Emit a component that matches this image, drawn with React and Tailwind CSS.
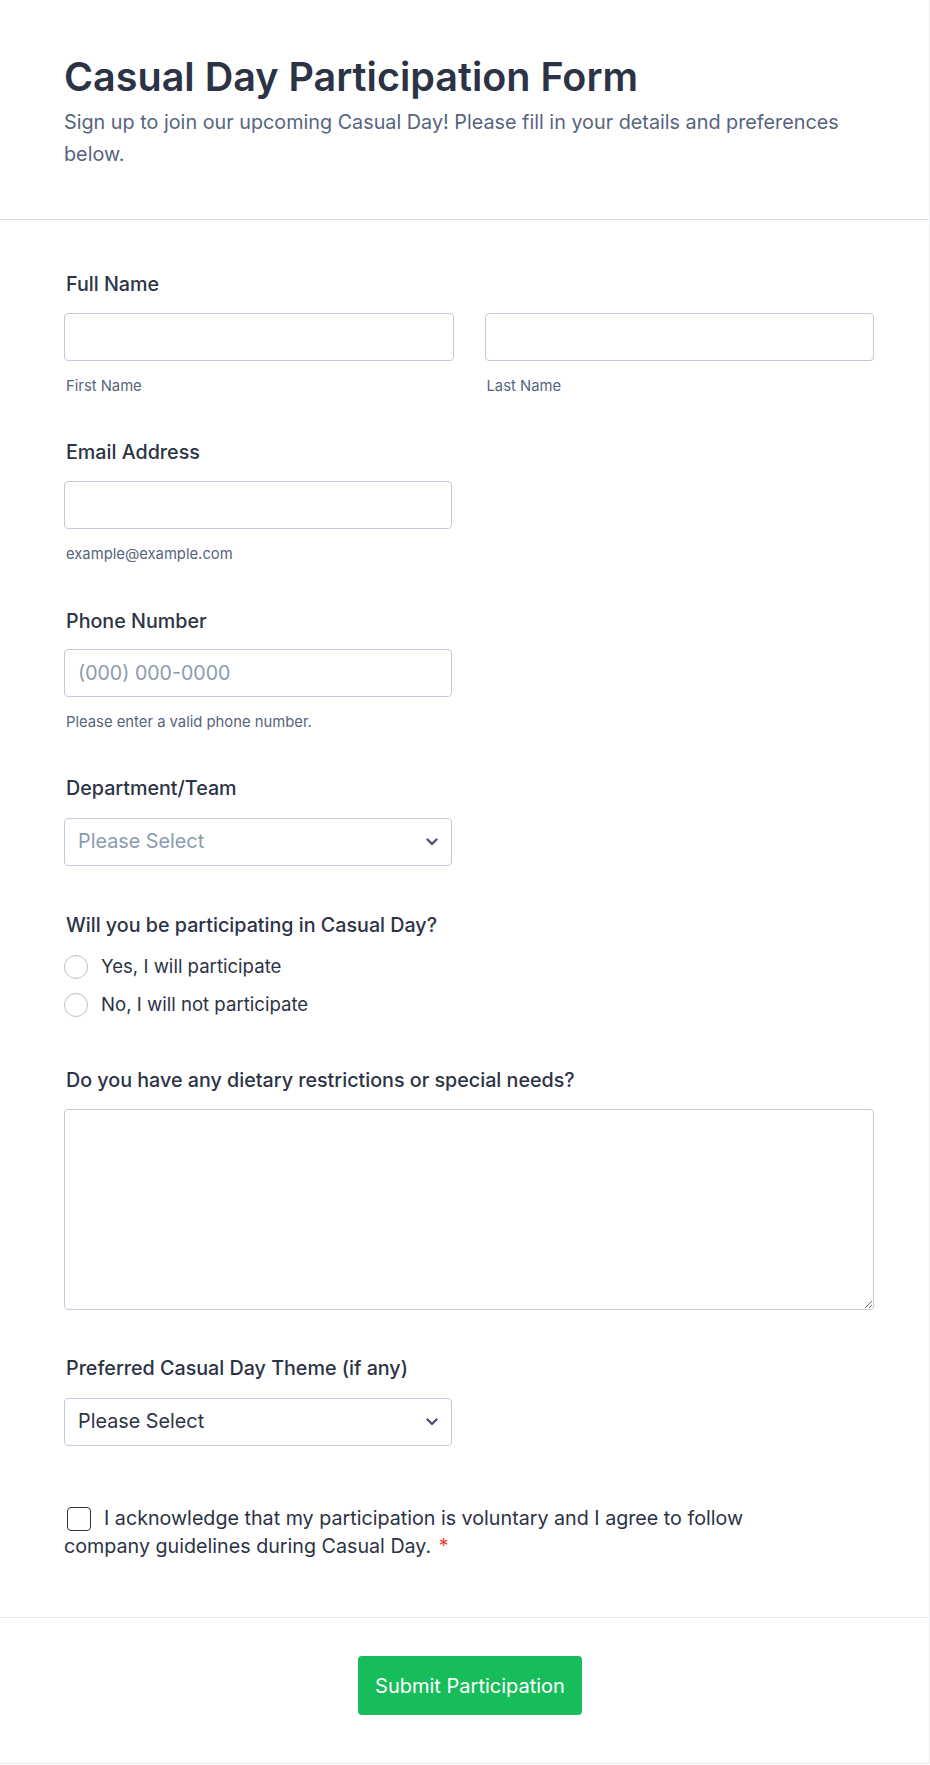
import { useState } from 'react'

function Chevron() {
  return (
    <svg width="12" height="8" viewBox="0 0 12 8" fill="none">
      <polyline points="1.5,1.5 6,6 10.5,1.5" stroke="#4a5570" strokeWidth="2.4" strokeLinecap="round" strokeLinejoin="round" />
    </svg>
  )
}

function Label({ children, className = '' }) {
  return <div className={`pl-[2px] text-[19.7px] leading-6 font-medium text-[#2c3345] ${className}`}>{children}</div>
}

function Sub({ children, className = '' }) {
  return <div className={`mt-[15px] pl-[2px] text-[14.8px] leading-5 text-[#57647e] ${className}`}>{children}</div>
}

const inputCls = "block w-full h-12 px-[13px] rounded border border-[#c3cad8] bg-white text-[19.6px] text-[#2c3345] placeholder:text-[#8c9ab0] outline-none"

function SelectBox({ text, muted }) {
  return (
    <div className="mt-[18px] w-[388px] h-12 px-[13px] flex items-center justify-between rounded border border-[#c3cad8] bg-white">
      <span className={`text-[19.8px] ${muted ? 'text-[#8c9ab0]' : 'text-[#2c3345]'}`}>{text}</span>
      <Chevron />
    </div>
  )
}

function Radio({ label, checked, onClick }) {
  return (
    <div className="flex items-center gap-[13px] h-6 cursor-pointer" onClick={onClick}>
      <span className="w-6 h-6 rounded-full border-[1.5px] border-[#b8bfcf] bg-white flex items-center justify-center">
        {checked && <span className="w-3 h-3 rounded-full bg-[#2c3345]" />}
      </span>
      <span className="text-[18.6px] text-[#2c3345]">{label}</span>
    </div>
  )
}

export default function App() {
  const [answer, setAnswer] = useState(null)
  const [agree, setAgree] = useState(false)

  return (
    <div className="w-full bg-white border-r border-[#eceef3] font-[Inter,sans-serif]">
      {/* header */}
      <div className="px-16 pt-[54px] pb-[49px] border-b border-[#dadde6]">
        <h1 className="text-[39.5px] leading-[46px] font-semibold text-[#2c3345]">Casual Day Participation Form</h1>
        <p className="mt-[6px] w-[790px] text-[19.8px] leading-8 text-[#57647e]">
          Sign up to join our upcoming Casual Day! Please fill in your details and preferences below.
        </p>
      </div>

      {/* fields */}
      <div className="pl-16 pr-[55px] pt-[52px] pb-[57px]">
        <Label>Full Name</Label>
        <div className="mt-[17px] grid grid-cols-2 gap-[31px]">
          <div>
            <input className={inputCls} />
            <Sub>First Name</Sub>
          </div>
          <div>
            <input className={inputCls} />
            <Sub>Last Name</Sub>
          </div>
        </div>

        <Label className="mt-[44px]">Email Address</Label>
        <div className="mt-[17px] w-[388px]">
          <input className={inputCls} />
        </div>
        <Sub>example@example.com</Sub>

        <Label className="mt-[45px]">Phone Number</Label>
        <div className="mt-[16px] w-[388px]">
          <input className={inputCls} placeholder="(000) 000-0000" />
        </div>
        <Sub>Please enter a valid phone number.</Sub>

        <Label className="mt-[44px]">Department/Team</Label>
        <SelectBox text="Please Select" muted />

        <Label className="mt-[47px]">Will you be participating in Casual Day?</Label>
        <div className="mt-[18px] flex flex-col gap-[14px]">
          <Radio label="Yes, I will participate" checked={answer === 'yes'} onClick={() => setAnswer('yes')} />
          <Radio label="No, I will not participate" checked={answer === 'no'} onClick={() => setAnswer('no')} />
        </div>

        <Label className="mt-[51px]">Do you have any dietary restrictions or special needs?</Label>
        <textarea className="mt-[17px] block w-full h-[201px] rounded border border-[#c3cad8] bg-white outline-none" />

        <Label className="mt-[46px]">Preferred Casual Day Theme (if any)</Label>
        <SelectBox text="Please Select" />

        <div className="mt-[58px] w-[700px] text-[19.7px] leading-7 text-[#2c3345]">
          <span
            onClick={() => setAgree(!agree)}
            className="inline-block w-6 h-6 mr-[13px] ml-[3px] align-[-6px] rounded-[4px] border-[1.5px] border-[#2c3345] bg-white cursor-pointer"
          />
          I acknowledge that my participation is voluntary and I agree to follow company guidelines during Casual Day.{' '}
          <span className="pl-[2px] text-[#f23a3c]">*</span>
        </div>
      </div>

      {/* footer */}
      <div className="border-t border-[#e3e8ee] border-b pt-[38px] pb-[48px] pl-[11px] flex justify-center">
        <button className="w-[224px] h-[59px] rounded bg-[#18bd5b] text-white text-[20px]">Submit Participation</button>
      </div>
    </div>
  )
}
